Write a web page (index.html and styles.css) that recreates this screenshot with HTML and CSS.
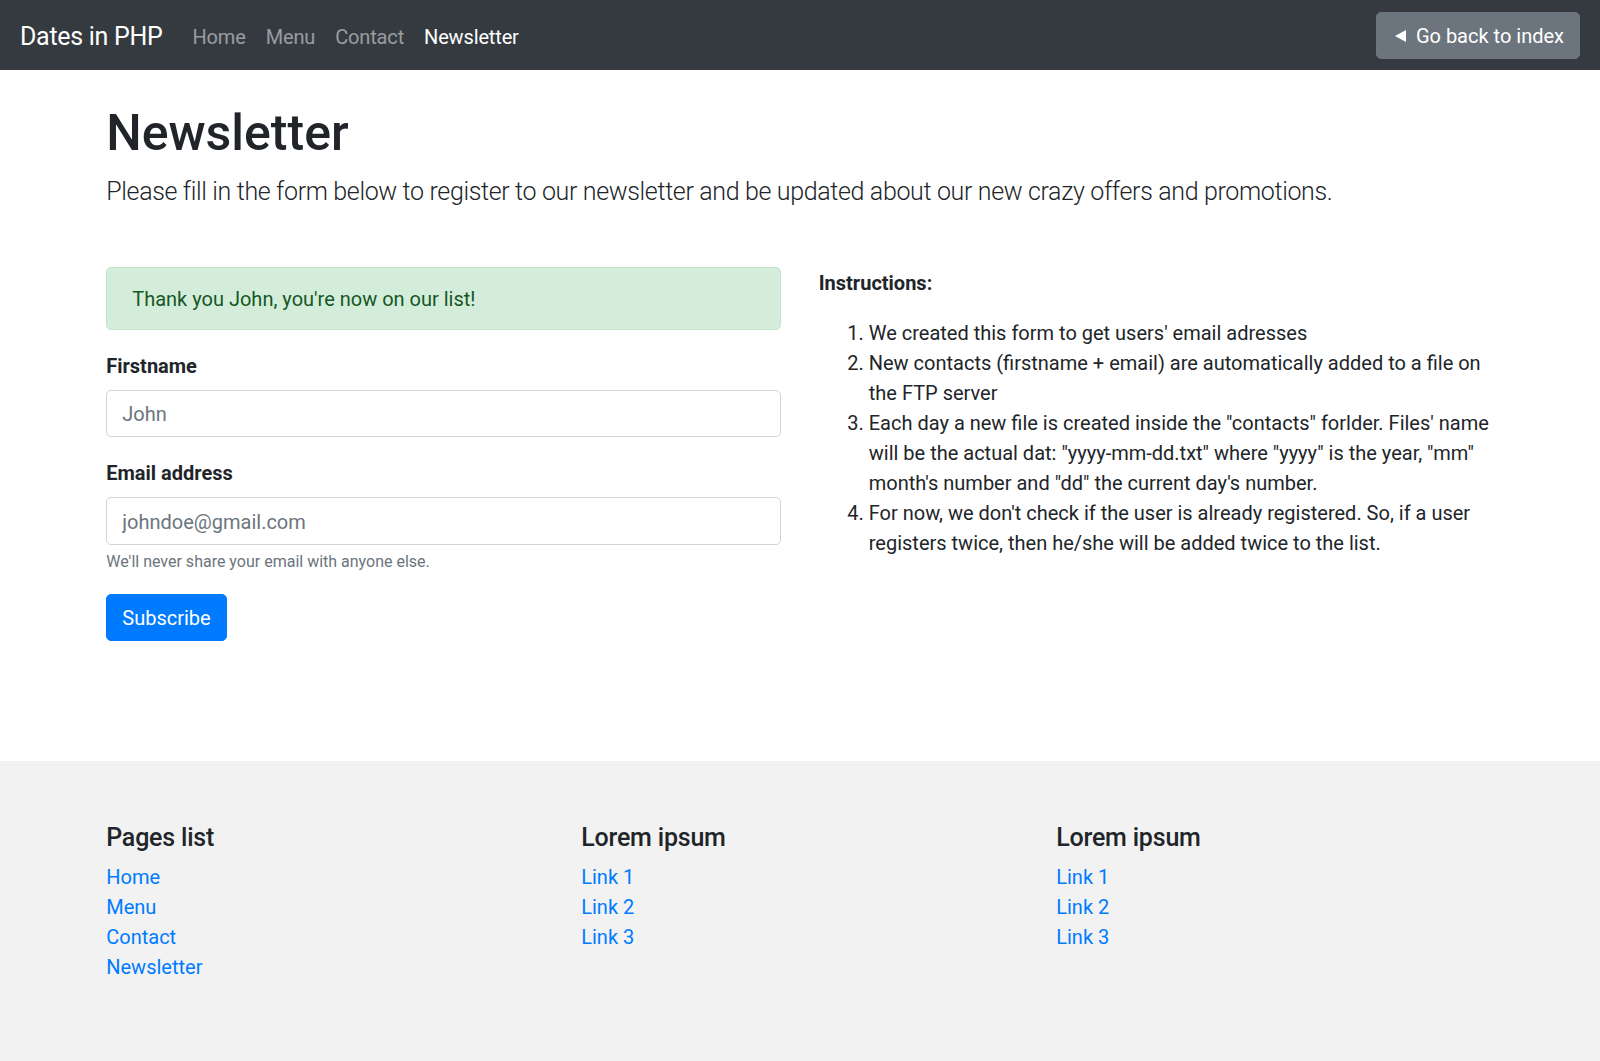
FILE: index.html
```html
<!DOCTYPE html>
<html lang="en">
<head>
<meta charset="utf-8">
<title>Newsletter - Dates in PHP</title>
<link rel="stylesheet" href="styles.css">
</head>
<body>
<nav class="navbar">
  <a class="brand" href="#">Dates in PHP</a>
  <ul class="nav-links">
    <li><a class="nav-link" href="#">Home</a></li>
    <li><a class="nav-link" href="#">Menu</a></li>
    <li><a class="nav-link" href="#">Contact</a></li>
    <li><a class="nav-link active" href="#">Newsletter</a></li>
  </ul>
  <a class="btn btn-secondary back-btn" href="#"><svg class="back-icon" viewBox="0 0 16 16" width="16" height="16" aria-hidden="true"><polygon points="3,8 14,2 14,14" fill="#fff"/></svg>Go back to index</a>
</nav>

<main class="container main">
  <h1 class="page-title">Newsletter</h1>
  <p class="lead">Please fill in the form below to register to our newsletter and be updated about our new crazy offers and promotions.</p>

  <div class="row">
    <div class="col">
      <div class="alert">Thank you John, you're now on our list!</div>
      <form class="form">
        <div class="form-group">
          <label for="firstname">Firstname</label>
          <input class="form-control" type="text" id="firstname" placeholder="John">
        </div>
        <div class="form-group">
          <label for="email">Email address</label>
          <input class="form-control" type="email" id="email" placeholder="johndoe@gmail.com">
          <small class="form-text">We'll never share your email with anyone else.</small>
        </div>
        <button class="btn btn-primary" type="submit">Subscribe</button>
      </form>
    </div>
    <div class="col col-right">
      <p class="instr-title"><strong>Instructions:</strong></p>
      <ol class="instr-list">
        <li>We created this form to get users' email adresses</li>
        <li>New contacts (firstname + email) are automatically added to a file on the FTP server</li>
        <li>Each day a new file is created inside the "contacts" forlder. Files' name will be the actual dat: "yyyy-mm-dd.txt" where "yyyy" is the year, "mm" month's number and "dd" the current day's number.</li>
        <li>For now, we don't check if the user is already registered. So, if a user registers twice, then he/she will be added twice to the list.</li>
      </ol>
    </div>
  </div>
</main>

<footer class="footer">
  <div class="container">
    <div class="row">
      <div class="col-3">
        <h5 class="footer-title">Pages list</h5>
        <ul class="footer-links">
          <li><a href="#">Home</a></li>
          <li><a href="#">Menu</a></li>
          <li><a href="#">Contact</a></li>
          <li><a href="#">Newsletter</a></li>
        </ul>
      </div>
      <div class="col-3">
        <h5 class="footer-title">Lorem ipsum</h5>
        <ul class="footer-links">
          <li><a href="#">Link 1</a></li>
          <li><a href="#">Link 2</a></li>
          <li><a href="#">Link 3</a></li>
        </ul>
      </div>
      <div class="col-3">
        <h5 class="footer-title">Lorem ipsum</h5>
        <ul class="footer-links">
          <li><a href="#">Link 1</a></li>
          <li><a href="#">Link 2</a></li>
          <li><a href="#">Link 3</a></li>
        </ul>
      </div>
    </div>
  </div>
</footer>
</body>
</html>
```
FILE: styles.css
```css
html {
  font-size: 20px;
}
*, *::before, *::after {
  box-sizing: border-box;
}
body {
  margin: 0;
  font-family: "Segoe UI", Roboto, "Helvetica Neue", Arial, sans-serif;
  font-size: 1rem;
  font-weight: 400;
  line-height: 1.5;
  color: #212529;
  background: #fff;
}
a {
  text-decoration: none;
}

/* navbar */
.navbar {
  display: flex;
  align-items: center;
  height: 70px;
  padding: 10px 20px;
  background: #343a40;
}
.brand {
  font-size: 1.25rem;
  line-height: 1.5;
  padding: 8.25px 0 4.25px;
  margin-right: 20px;
  color: #fff;
  white-space: nowrap;
  letter-spacing: -0.3px;
}
.nav-links {
  display: flex;
  list-style: none;
  margin: 0;
  padding: 0;
}
.nav-link {
  display: block;
  padding: 12px 10px 8px;
  color: rgba(255, 255, 255, 0.5);
  letter-spacing: -0.15px;
}
.nav-link.active {
  color: #fff;
}
.btn {
  display: inline-flex;
  align-items: center;
  font-family: inherit;
  font-size: 1rem;
  line-height: 1.5;
  padding: 7.5px 15px;
  border: 1px solid transparent;
  border-radius: 5px;
  color: #fff;
  cursor: pointer;
}
.btn-secondary {
  background: #6c757d;
  border-color: #6c757d;
}
.btn-primary {
  background: #007bff;
  border-color: #007bff;
}
.back-btn {
  margin-left: auto;
  padding-top: 8.5px;
  padding-bottom: 6.5px;
}
.back-icon {
  margin-right: 8px;
  flex: none;
}

/* layout */
.container {
  max-width: 1425px;
  margin: 0 auto;
  padding: 0 18.75px;
}
.row {
  display: flex;
  margin: 0 -18.75px;
}
.col {
  flex: 0 0 50%;
  max-width: 50%;
  padding: 0 18.75px;
}
.col-3 {
  flex: 0 0 33.3333%;
  max-width: 33.3333%;
  padding: 0 18.75px;
}

/* main */
.main {
  padding-top: 33px;
  padding-bottom: 120px;
}
.page-title {
  font-size: 50px;
  font-weight: 500;
  line-height: 1.2;
  margin: 0 0 10px;
}
.lead {
  font-size: 25px;
  font-weight: 300;
  line-height: 1.5;
  margin: 0 0 56px;
  letter-spacing: -0.35px;
}
.alert {
  padding: 16px 25px 15px;
  margin-bottom: 20px;
  border: 1px solid #c3e6cb;
  border-radius: 5px;
  background: #d4edda;
  color: #155724;
}
.form-group {
  margin-bottom: 20px;
}
.form-group label {
  display: inline-block;
  padding-top: 1px;
  margin-bottom: 9px;
  font-weight: 700;
}
.form-control {
  display: block;
  width: 100%;
  height: 47.5px;
  padding: 8.5px 15px 6.5px;
  font-family: inherit;
  font-size: 1rem;
  line-height: 1.5;
  color: #495057;
  background: #fff;
  border: 1px solid #ced4da;
  border-radius: 5px;
}
.form-control::placeholder {
  color: #6c757d;
  opacity: 1;
}
.form-text {
  display: block;
  margin-top: 5px;
  font-size: 16px;
  color: #6c757d;
}
.form .btn-primary {
  padding-top: 8.5px;
  padding-bottom: 6.5px;
}
.instr-title {
  margin: 0 0 20px;
  padding-top: 1px;
}
.instr-list {
  margin: 0 0 20px;
  padding-left: 50px;
}

/* footer */
.footer {
  background: #f2f2f2;
  padding: 62px 0 80px;
}
.footer-title {
  font-size: 25px;
  font-weight: 500;
  line-height: 1.2;
  margin: 0 0 9px;
  letter-spacing: -0.2px;
}
.footer-links {
  list-style: none;
  margin: 0;
  padding: 0;
}
.footer-links a {
  color: #007bff;
}
```
